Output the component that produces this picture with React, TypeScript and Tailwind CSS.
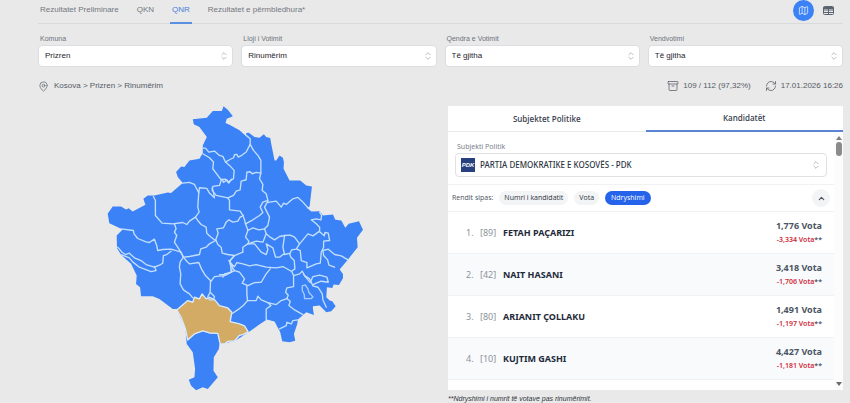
import { Archive, ChevronUp, ChevronsUpDown, Map as MapIcon, MapPin, RefreshCw } from "lucide-react";

const tabs = ["Rezultatet Preliminare", "QKN", "QNR", "Rezultatet e përmbledhura*"];

const filters = [
    { id: "komuna", label: "Komuna", value: "Prizren" },
    { id: "lloji", label: "Lloji i Votimit", value: "Rinumërim" },
    { id: "qendra", label: "Qendra e Votimit", value: "Të gjitha" },
    { id: "vendvotimi", label: "Vendvotimi", value: "Të gjitha" },
];

const sortOptions = ["Numri i kandidatit", "Vota", "Ndryshimi"];

const candidates = [
    { number: 89, name: "FETAH PAÇARIZI", votes: "1,776", change: "-3,334" },
    { number: 42, name: "NAIT HASANI", votes: "3,418", change: "-1,706" },
    { number: 80, name: "ARIANIT ÇOLLAKU", votes: "1,491", change: "-1,197" },
    { number: 10, name: "KUJTIM GASHI", votes: "4,427", change: "-1,181" },
];

// Borders between the municipalities
const borders = [
    "310,143 318,143 328,155 345,152 360,165 370,168 378,185 390,178 402,172 405,163 412,162 416,170 428,164 440,155 452,132 452,115 440,105",
    "310,160 330,172 342,185 340,205 355,225 365,238 378,236 385,245 402,235 404,210 390,195 378,185",
    "368,236 372,246 382,238 388,248 396,236",
    "365,240 360,255 340,258 338,270 350,285 385,292 402,285 410,272 422,268 425,242 440,238 442,215 452,214 458,220 470,216 484,218",
    "452,132 462,150 475,165 484,180 484,218 480,235 490,252 488,270 500,280 505,300",
    "250,248 270,246 285,252 298,277 300,262 322,264 330,278 345,292 342,275 338,262",
    "298,275 295,320 299,335 288,350 270,362 262,372 250,366 220,370 188,368 168,345 168,300 162,288",
    "288,350 295,360 305,372 320,380 322,398 335,410 348,420",
    "385,292 390,300 390,328 422,332 430,345 435,358 438,370",
    "348,420 356,398 352,385 372,382 380,365 388,358 400,365 415,362 422,350 432,345",
    "438,370 460,358 480,345 490,336 482,320 490,305 505,300",
    "505,302 495,320 510,350 505,375 495,385",
    "505,306 530,302 545,320 552,308 560,312 580,295 595,291 610,305 625,322",
    "438,370 442,380 445,390 438,410 448,422 445,430 470,422 490,425 500,400 495,385 478,388 460,382 445,390",
    "500,400 512,410 525,418 540,408 555,405 572,404 585,410 600,430 625,400 640,406 660,392 660,380 650,370 635,358 650,355 664,358 666,345 660,335",
    "555,405 550,440 555,462 572,458 576,448 590,446 600,430",
    "445,430 465,430 485,455 500,462 505,446 500,430 520,442 528,470 540,470 550,462 555,460",
    "570,460 574,470 584,480 586,505 576,512 582,525",
    "592,446 602,450 605,480 622,486 622,502 650,490 662,488 665,455 672,440 672,422 690,420 686,398 676,396 674,406 660,394",
    "670,450 686,446 705,462 725,466 745,478",
    "670,450 672,465 684,478 688,494 705,500",
    "392,490 405,498 412,486 430,490 450,496 470,492 500,500 530,502 550,498 575,512",
    "445,430 430,440 430,455 405,465 392,480 392,490 405,510 420,515 435,535 428,548 445,555 465,546 485,545 500,520 512,505",
    "442,555 442,580 444,600 432,614 420,624 396,640",
    "444,600 470,600 475,587 485,598 505,606 514,615 500,625 500,660",
    "505,606 530,612 545,600 562,594 566,584 558,575 562,562 582,558 582,525",
    "562,594 572,602 568,615 585,628 610,642",
    "540,685 560,675 562,665 575,670 580,660 595,658",
    "582,525 600,520 608,512 616,526 630,535 640,556 655,560 668,580 670,598 680,620",
    "612,522 632,546 640,528 660,524 682,530 686,545 665,542 650,548 640,552",
    "388,480 400,495 395,515 375,520 370,530",
    "65,385 102,390 104,400 115,414 140,424 150,426 165,416 172,435 175,450 190,447 215,446 245,455 252,470",
    "55,440 68,455 78,462 90,458 105,472 125,480 140,492 165,500 180,494 190,488 192,465 202,462 215,452",
    "65,462 90,472 100,484 120,500 155,513 170,510 165,498",
    "225,370 230,385 225,395 232,405 225,425 240,448 252,470",
    "252,470 242,485 240,500 244,520 242,550 252,568 270,580 280,592",
    "252,470 270,468 300,462 304,445 320,440 330,430 348,420",
    "252,470 262,482 270,490 298,486 306,505 318,525 335,542 345,528 375,525 395,515 392,480 405,465 385,462 368,458 365,440 355,432 350,420",
    "333,542 332,575 325,588 330,598 342,598 345,588 332,575",
    "360,522 380,522 405,510",
];

function KosovoMap() {
    return (
        <svg viewBox="20 17 776 862" className="w-full max-w-[259px]" role="img" aria-label="Kosova" strokeLinejoin="round" strokeLinecap="round">
            <path
                fill="#3b82f6"
                d="M372 18L385 28L400 48L382 55L378 68L390 73L420 90L440 108V98L448 97L465 110L480 112L493 102L500 110L512 113L515 130L525 180H530L540 165L550 172L553 185L552 205L570 240L602 240L620 255L637 258L630 318L622 322L635 333L660 332L670 345L700 342L707 358L725 360L737 382L747 370L778 362L790 388L772 412L774 440L745 477L720 507L730 520V533L718 553L702 552L698 562L682 560L680 590L690 600L698 602L708 617L695 632L680 635L660 615L640 617V625L643 643L620 635L595 657L593 670L583 700L587 720L570 725L548 722L542 695L525 663L502 657L475 675L450 693L405 722L360 730L358 745L343 770L342 810L355 830L325 865L310 860L290 869L275 855L268 837L285 830L287 805L280 755L262 730L258 685L232 625L220 625L180 595L160 587L125 587L122 560L110 550L112 525L95 490L65 463L53 443L52 405L70 387L30 368L25 340L40 318L65 318L80 327L88 323L100 333L138 313L132 295L145 285H165L205 276L215 278L250 248L235 230L230 215L245 198L255 200L270 180L300 175L310 158V135L322 110L300 80L283 72L280 57L322 52L340 32L367 32Z"
            />
            <path
                fill="#d3ab65"
                stroke="#dcecff"
                strokeWidth="4"
                d="M232 628L265 600L280 605L285 590L300 595L308 580L320 595L330 590L345 597L360 615L385 622L397 635L392 663L420 670L435 676L446 694L430 702L420 704L405 721L385 722L375 730L362 730L355 698L330 697L310 691L285 700L265 718L258 685L245 650Z"
            />
            <g fill="none" stroke="#c3dffe" strokeWidth="4">
                {borders.map((points) => (
                    <polyline key={points} points={points} />
                ))}
            </g>
            <path fill="none" stroke="#a9cdfb" strokeWidth="4" d="M608 556L617 553L625 565L628 576L640 589L635 594H615L614 582L608 570Z" />
        </svg>
    );
}

function PdkLogo() {
    return (
        <svg viewBox="0 0 14 14" className="size-3.5" aria-hidden="true">
            <rect width="14" height="14" fill="#27417f" />
            <text x="7" y="9" textAnchor="middle" fontSize="6" fontWeight="700" fontStyle="italic" fill="#fff" fontFamily="Liberation Sans, sans-serif">
                PDK
            </text>
        </svg>
    );
}

function TableIcon() {
    return (
        <svg viewBox="0 0 22 18" className="w-[11px]" fill="none" stroke="currentColor" strokeWidth="2" aria-hidden="true">
            <rect x="1" y="1" width="20" height="16" rx="2" />
            <path d="M1 4H21" strokeWidth="4" />
            <path d="M1 8H21M1 13H21M11 4V17" />
        </svg>
    );
}

export default function App() {
    return (
        <div className="min-h-screen bg-[#e9e9e9] pr-[7px] pl-[38px] font-['Liberation_Sans',Arial,sans-serif] text-[8px] leading-3 text-[#555b66]">
            {/* Tabs */}
            <header className="flex h-6 items-stretch justify-between border-b border-[#d9dadc]">
                <nav className="flex gap-3.5">
                    {tabs.map((tab) => (
                        <a
                            key={tab}
                            href="#"
                            className={
                                tab === "QNR"
                                    ? "-mb-px border-b-2 border-[#5b8fe0] px-0.5 pt-1 text-[#4a7ddb]"
                                    : "px-0.5 pt-1 text-[#737780]"
                            }
                        >
                            {tab}
                        </a>
                    ))}
                </nav>
                <div className="flex h-[21px] items-center gap-1 pr-1">
                    <button aria-label="Harta" className="flex size-[21px] items-center justify-center rounded-full bg-[#3b82f6] text-white">
                        <MapIcon size={11} strokeWidth={1.5} />
                    </button>
                    <button aria-label="Tabela" className="flex size-[21px] items-center justify-center rounded-full text-[#5b6270]">
                        <TableIcon />
                    </button>
                </div>
            </header>

            {/* Filters */}
            <div className="grid grid-cols-4 gap-2 pt-[9px]">
                {filters.map((filter) => (
                    <div key={filter.id}>
                        <label htmlFor={filter.id} className="block px-0.5 text-[7px] text-[#6e727b]">
                            {filter.label}
                        </label>
                        <div className="relative">
                            <select
                                id={filter.id}
                                className="block h-[22px] w-full appearance-none rounded border border-[#dcdde0] bg-white pr-5 pl-1.5 text-[8px] text-[#1f242c]"
                            >
                                <option>{filter.value}</option>
                            </select>
                            <ChevronsUpDown size={10} strokeWidth={1.5} className="pointer-events-none absolute top-1.5 right-1 text-[#8d929b]" />
                        </div>
                    </div>
                ))}
            </div>

            {/* Breadcrumb and status */}
            <div className="flex items-center justify-between pt-[13px] pb-3.5">
                <div className="flex items-center gap-[5px]">
                    <MapPin size={11} strokeWidth={1.5} />
                    <span>Kosova &gt; Prizren &gt; Rinumërim</span>
                </div>
                <div className="flex items-center gap-3.5">
                    <div className="flex items-center gap-1">
                        <Archive size={12} strokeWidth={1.5} />
                        <span>109 / 112 (97,32%)</span>
                    </div>
                    <div className="flex items-center gap-1">
                        <RefreshCw size={12} strokeWidth={1.5} />
                        <span>17.01.2026 16:26</span>
                    </div>
                </div>
            </div>

            <main className="grid grid-cols-2 gap-[15px]">
                <div className="flex items-start justify-center">
                    <KosovoMap />
                </div>

                <section>
                    <div className="bg-white font-['Noto_Sans',sans-serif]">
                        <div className="grid h-[26px] grid-cols-2 font-['Open_Sans','Noto_Sans',sans-serif] text-[8px] font-semibold text-[#3b4350]">
                            <button className="border-b border-[#e8eaed]">Subjektet Politike</button>
                            <button className="border-b-2 border-[#5b84d2]">Kandidatët</button>
                        </div>

                        <div className="flex">
                            <div className="min-w-0 flex-1">
                                <div className="px-[7px] pt-[9px] pb-[7px]">
                                    <label htmlFor="subjekti" className="block px-0.5 text-[7px] text-[#7d828c]">
                                        Subjekti Politik
                                    </label>
                                    <div className="relative">
                                        <select
                                            id="subjekti"
                                            className="block h-6 w-full appearance-none rounded border border-[#dfe1e5] bg-white pr-5 pl-6 text-[8px] font-medium text-[#2c3542]"
                                        >
                                            <option>PARTIA DEMOKRATIKE E KOSOVËS - PDK</option>
                                        </select>
                                        <span className="pointer-events-none absolute top-[5px] left-1.5">
                                            <PdkLogo />
                                        </span>
                                        <ChevronsUpDown size={10} strokeWidth={1.5} className="pointer-events-none absolute top-[7px] right-1.5 text-[#8d929b]" />
                                    </div>
                                </div>

                                {/* Sorting */}
                                <div className="flex h-7 items-center border-y border-[#f0f1f3] px-1 font-['Open_Sans','Noto_Sans',sans-serif] text-[7px] text-[#4b5260]">
                                    <span>Rendit sipas:</span>
                                    <div className="ml-1.5 flex gap-1.5">
                                        {sortOptions.map((option) => (
                                            <button
                                                key={option}
                                                className={
                                                    option === "Ndryshimi"
                                                        ? "h-3.5 rounded-full bg-[#2563eb] px-1.5 font-medium text-white"
                                                        : "h-3.5 rounded-full bg-[#f3f4f6] px-[5px] font-medium text-[#2b3340]"
                                                }
                                            >
                                                {option}
                                            </button>
                                        ))}
                                    </div>
                                    <button aria-label="Mbyll" className="ml-auto flex size-[18px] items-center justify-center rounded-full bg-[#f3f4f6]">
                                        <ChevronUp size={9} strokeWidth={3} />
                                    </button>
                                </div>

                                {/* Candidates */}
                                <ol>
                                    {candidates.map((candidate, index) => (
                                        <li
                                            key={candidate.number}
                                            className="flex h-[42px] items-center border-b border-[#f0f2f4] pr-3 pl-[18px] text-[9px] text-[#8d939c] even:bg-[#f8fafc]"
                                        >
                                            <span className="w-3.5">{index + 1}.</span>
                                            <span className="w-[23px]">[{candidate.number}]</span>
                                            <span className="font-bold text-[#1f2a3a]">{candidate.name}</span>
                                            <div className="ml-auto text-right">
                                                <div className="font-bold text-[#4b5563]">{candidate.votes} Vota</div>
                                                <div className="pt-0.5 text-[7px] font-semibold text-[#4b5563]">
                                                    <span className="text-[#cf2c3a]">{candidate.change} Vota</span>**
                                                </div>
                                            </div>
                                        </li>
                                    ))}
                                </ol>
                                <div className="h-2.5"></div>
                            </div>

                            {/* Scrollbar */}
                            <div className="flex w-[9px] flex-col items-center bg-[#fcfcfc] py-1">
                                <svg viewBox="0 0 6 4" className="w-1.5">
                                    <path d="M3 0L6 4H0Z" fill="#7f7f7f" />
                                </svg>
                                <div className="mt-0.5 h-3.5 w-1.5 rounded-full bg-[#8b8b8b]"></div>
                                <svg viewBox="0 0 6 4" className="mt-auto w-1.5">
                                    <path d="M0 0H6L3 4Z" fill="#6b6b6b" />
                                </svg>
                            </div>
                        </div>
                    </div>
                    <p className="pt-1 text-[7px] leading-[9px] text-[#2f343c] italic">**Ndryshimi i numrit të votave pas rinumërimit.</p>
                </section>
            </main>
        </div>
    );
}
